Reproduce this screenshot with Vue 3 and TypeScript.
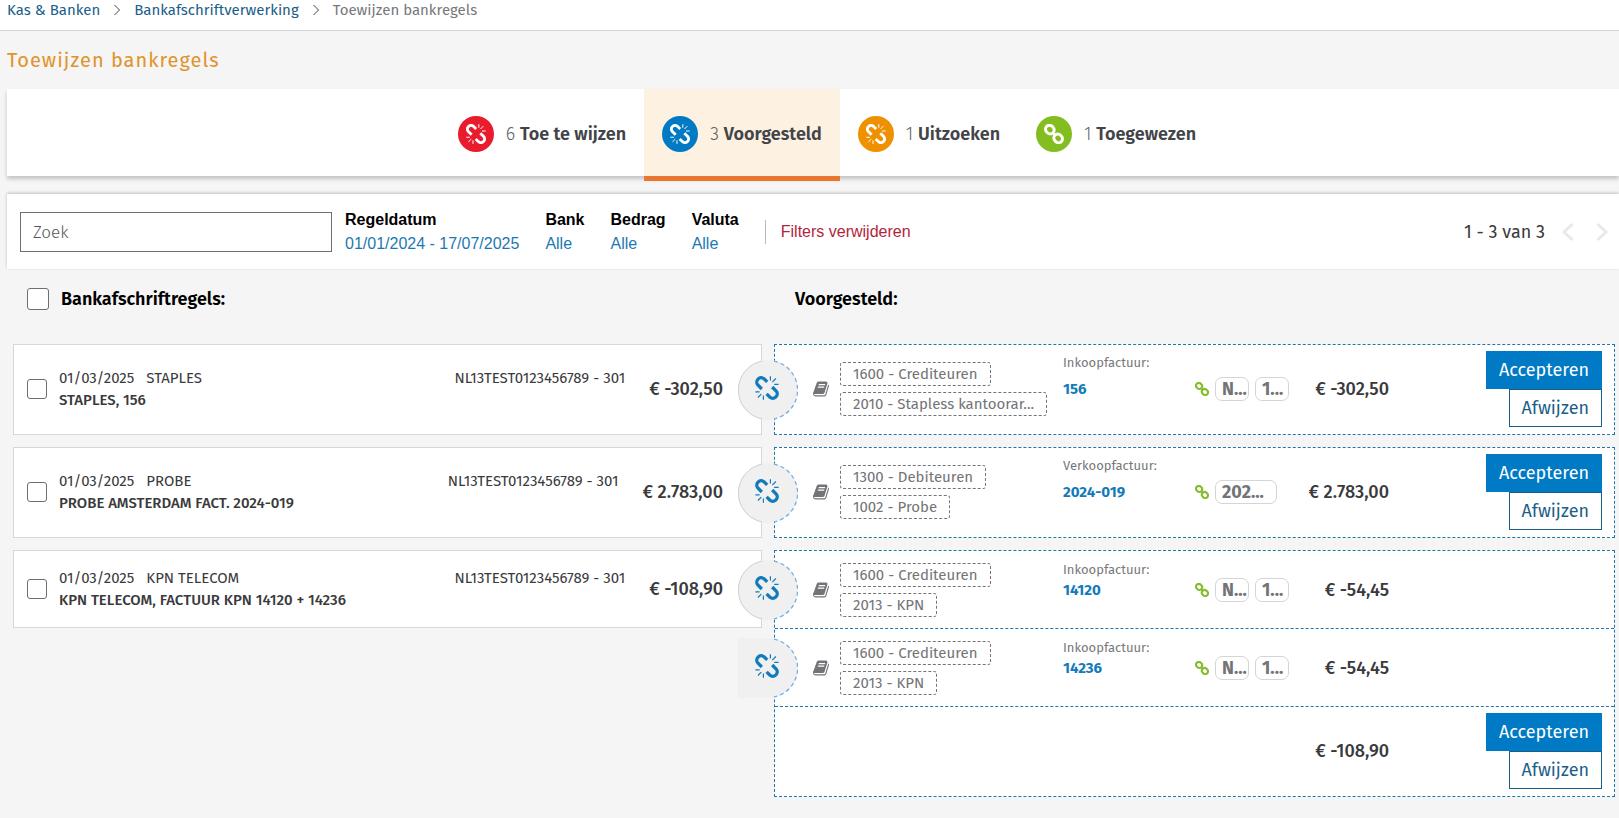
<script setup lang="ts">
import { ref } from 'vue'

type TabIcon = 'broken' | 'linked'
interface Tab { id: string; count: number; label: string; icon: TabIcon; tone: string }
interface Proposal { ledger: string[]; kind: string; invoice: string; chips: string[]; wide?: boolean; amount: string }
interface BankLine {
  id: number
  date: string
  party: string
  description: string
  account: string
  amount: string
  proposals: Proposal[]
}

const activeTab = ref('voorgesteld')
const search = ref('')
const selectAll = ref(false)
const selected = ref<number[]>([])

const tabs: Tab[] = [
  { id: 'toe-te-wijzen', count: 6, label: 'Toe te wijzen', icon: 'broken', tone: 'red' },
  { id: 'voorgesteld', count: 3, label: 'Voorgesteld', icon: 'broken', tone: 'blue' },
  { id: 'uitzoeken', count: 1, label: 'Uitzoeken', icon: 'broken', tone: 'orange' },
  { id: 'toegewezen', count: 1, label: 'Toegewezen', icon: 'linked', tone: 'green' },
]

const filters = [
  { label: 'Regeldatum', value: '01/01/2024 - 17/07/2025' },
  { label: 'Bank', value: 'Alle' },
  { label: 'Bedrag', value: 'Alle' },
  { label: 'Valuta', value: 'Alle' },
]

const lines: BankLine[] = [
  {
    id: 1, date: '01/03/2025', party: 'STAPLES', description: 'STAPLES, 156',
    account: 'NL13TEST0123456789 - 301', amount: '€ -302,50',
    proposals: [
      { ledger: ['1600 - Crediteuren', '2010 - Stapless kantoorar...'], kind: 'Inkoopfactuur:', invoice: '156', chips: ['N...', '1...'], amount: '€ -302,50' },
    ],
  },
  {
    id: 2, date: '01/03/2025', party: 'PROBE', description: 'PROBE AMSTERDAM FACT. 2024-019',
    account: 'NL13TEST0123456789 - 301', amount: '€ 2.783,00',
    proposals: [
      { ledger: ['1300 - Debiteuren', '1002 - Probe'], kind: 'Verkoopfactuur:', invoice: '2024-019', chips: ['202...'], wide: true, amount: '€ 2.783,00' },
    ],
  },
  {
    id: 3, date: '01/03/2025', party: 'KPN TELECOM', description: 'KPN TELECOM, FACTUUR KPN 14120 + 14236',
    account: 'NL13TEST0123456789 - 301', amount: '€ -108,90',
    proposals: [
      { ledger: ['1600 - Crediteuren', '2013 - KPN'], kind: 'Inkoopfactuur:', invoice: '14120', chips: ['N...', '1...'], amount: '€ -54,45' },
      { ledger: ['1600 - Crediteuren', '2013 - KPN'], kind: 'Inkoopfactuur:', invoice: '14236', chips: ['N...', '1...'], amount: '€ -54,45' },
    ],
  },
]

function toggleAll() {
  selected.value = selectAll.value ? lines.map((l) => l.id) : []
}
</script>

<template>
  <svg class="defs" aria-hidden="true">
    <symbol id="icon-broken" viewBox="0 0 24 24">
      <g fill="none" stroke="currentColor">
        <path stroke-width="3.3" d="M12.2 5.9 9 2.8A4.4 4.4 0 0 0 2.8 9L6.8 13M11.6 17.9 15 21.2A4.4 4.4 0 0 0 21.2 15L17.2 11" />
        <path stroke-width="1.2" d="M15.4.3v4.2M20.9 2.5 17.3 6.1M19.2 8.4h4.4M.4 15.9h4.2M2.9 21.5 6.3 18.1M8.4 19.6v4.2" />
      </g>
    </symbol>
    <symbol id="icon-linked" viewBox="0 0 24 24">
      <g fill="none" stroke="currentColor" stroke-width="3.6">
        <rect x="1.600" y="2" width="10.800" height="9.400" rx="4.700" transform="rotate(45 7 6.700)" />
        <rect x="11.600" y="12.600" width="10.800" height="9.400" rx="4.700" transform="rotate(45 17 17.300)" />
        <path stroke-width="3" d="M10 10l4 4" />
      </g>
    </symbol>
    <symbol id="icon-book" viewBox="0 0 1664 1792">
      <path fill="currentColor" d="M1639 478q40 57 18 129l-275 906q-19 64-76.500 107.500t-122.500 43.500h-923q-77 0-148.500-53.500t-99.500-131.500q-24-67-2-127 0-4 3-27t4-37q1-8-3-21.500t-3-19.500q2-11 8-21t16.500-23.500 16.500-23.500q23-38 45-91.500t30-91.500q3-10 .5-30t-.5-28q3-11 17-28t17-23q21-36 42-92t25-90q1-9-2.500-32t.5-28q4-13 22-30.500t22-22.500q19-26 42.500-84.500t27.500-96.500q1-8-3-25.500t-2-26.500q2-8 9-18t18-23 17-21q8-12 16.500-30.500t15-35 16-36 19.500-32 26.500-23.500 36-11.500 47.500 5.500l-1 3q38-9 51-9h761q74 0 114 56t18 130l-274 906q-36 119-71.500 153.500t-128.500 34.500h-869q-27 0-38 15-11 16-1 43 24 70 144 70h923q29 0 56-15.500t35-41.500l300-987q7-22 5-57 38 15 59 43zm-1064 2q-4 13 2 22.500t20 9.500h608q13 0 25.500-9.500t16.500-22.500l21-64q4-13-2-22.500t-20-9.500h-608q-13 0-25.500 9.500t-16.500 22.500zm-83 256q-4 13 2 22.500t20 9.500h608q13 0 25.500-9.500t16.500-22.500l21-64q4-13-2-22.500t-20-9.500h-608q-13 0-25.500 9.500t-16.500 22.500z" />
    </symbol>
  </svg>

  <div class="page">
    <nav class="breadcrumb" aria-label="Kruimelpad">
      <a href="#">Kas &amp; Banken</a>
      <svg class="crumb-sep" viewBox="0 0 8 12"><path d="M1.500 1 6.500 6 1.500 11" /></svg>
      <a href="#">Bankafschriftverwerking</a>
      <svg class="crumb-sep" viewBox="0 0 8 12"><path d="M1.500 1 6.500 6 1.500 11" /></svg>
      <span>Toewijzen bankregels</span>
    </nav>

    <main>
      <h1 class="title">Toewijzen bankregels</h1>

      <nav class="tabs" aria-label="Status">
        <button
          v-for="tab in tabs"
          :key="tab.id"
          type="button"
          class="tab"
          :class="{ active: tab.id === activeTab }"
          @click="activeTab = tab.id"
        >
          <span class="tab-icon" :class="tab.tone">
            <svg><use :href="`#icon-${tab.icon}`" /></svg>
          </span>
          <span class="tab-text"><span class="tab-count">{{ tab.count }}</span> <b>{{ tab.label }}</b></span>
        </button>
      </nav>

      <section class="filters">
        <input v-model="search" class="search" type="text" placeholder="Zoek" aria-label="Zoek" />
        <div v-for="f in filters" :key="f.label" class="filter">
          <span class="filter-label">{{ f.label }}</span>
          <button type="button" class="filter-value">{{ f.value }}</button>
        </div>
        <span class="divider"></span>
        <button type="button" class="clear">Filters verwijderen</button>
        <div class="pager">
          <span>1 - 3 van 3</span>
          <button type="button" aria-label="Vorige"><svg viewBox="0 0 12 20"><path d="M10.500 2 2 10 10.500 18" /></svg></button>
          <button type="button" aria-label="Volgende"><svg viewBox="0 0 12 20"><path d="M1.500 2 10 10 1.500 18" /></svg></button>
        </div>
      </section>

      <div class="board">
        <div class="pair heads">
          <label class="head head-left">
            <input v-model="selectAll" type="checkbox" class="check large" @change="toggleAll" />
            Bankafschriftregels:
          </label>
          <h2 class="head head-right">Voorgesteld:</h2>
        </div>

        <div v-for="line in lines" :key="line.id" class="pair">
          <article class="bank-line" :class="{ compact: line.proposals.length > 1 }">
            <input v-model="selected" type="checkbox" class="check" :value="line.id" :aria-label="line.description" />
            <div class="line-text">
              <div class="line-top">
                <span>{{ line.date }}</span>
                <span>{{ line.party }}</span>
                <span class="account">{{ line.account }}</span>
              </div>
              <strong>{{ line.description }}</strong>
            </div>
            <span class="amount">{{ line.amount }}</span>
          </article>

          <div class="proposals">
            <div
              v-for="(p, i) in line.proposals"
              :key="p.invoice"
              class="proposal"
              :class="{ compact: line.proposals.length > 1 }"
            >
              <svg class="knot" viewBox="0 0 60 60">
                <path v-if="i > 0" class="knot-fill" d="M0 0H30A30 30 0 0 1 30 60H0Z" />
                <circle v-else class="knot-fill" cx="30" cy="30" r="30" />
                <path v-if="i === 0" class="knot-solid" d="M24 1.100A29.500 29.500 0 0 0 24 58.900" />
                <path class="knot-dashed" d="M36 1.100A29.500 29.500 0 0 1 36 58.900" />
                <use class="knot-icon" href="#icon-broken" x="17" y="16" width="24" height="24" />
              </svg>
              <svg class="book"><use href="#icon-book" /></svg>
              <div class="ledger">
                <span v-for="l in p.ledger" :key="l" class="tag">{{ l }}</span>
              </div>
              <div class="invoice">
                <span class="invoice-kind">{{ p.kind }}</span>
                <a href="#">{{ p.invoice }}</a>
              </div>
              <div class="matches">
                <svg><use href="#icon-linked" /></svg>
                <span v-for="c in p.chips" :key="c" class="chip" :class="{ wide: p.wide }">{{ c }}</span>
              </div>
              <span class="amount">{{ p.amount }}</span>
              <div v-if="line.proposals.length === 1" class="actions">
                <button type="button" class="accept">Accepteren</button>
                <button type="button" class="reject">Afwijzen</button>
              </div>
            </div>
            <div v-if="line.proposals.length > 1" class="proposal">
              <span class="amount total">{{ line.amount }}</span>
              <div class="actions">
                <button type="button" class="accept">Accepteren</button>
                <button type="button" class="reject">Afwijzen</button>
              </div>
            </div>
          </div>
        </div>
      </div>
    </main>
  </div>
</template>

<style>
body {
  background: #f5f5f5;
}
</style>

<style scoped>
.defs {
  position: absolute;
  width: 0;
  height: 0;
}
.page {
  min-height: 100vh;
  overflow: hidden;
  box-sizing: border-box;
  background: #f5f5f5;
  color: #3a3a3c;
  font-family: "Fira Sans", Roboto, sans-serif;
  font-size: 15px;
}
button {
  font: inherit;
  color: inherit;
  background: none;
  border: 0;
  padding: 0;
  cursor: pointer;
}
a {
  text-decoration: none;
}

.breadcrumb {
  display: flex;
  align-items: center;
  gap: 13px;
  padding: 0 7px 10px;
  background: #fff;
  border-bottom: 1px solid #d4d4d4;
  font-size: 15px;
  line-height: 20px;
  color: #77787b;
}
.breadcrumb a {
  color: #1b5e88;
}
.crumb-sep {
  width: 8px;
  height: 12px;
  fill: none;
  stroke: #444;
}

.title {
  margin: 17px 0 17px 7px;
  font-size: 20px;
  font-weight: 400;
  line-height: 24px;
  letter-spacing: 1px;
  color: #e0932a;
}

.tabs {
  display: flex;
  justify-content: center;
  margin-left: 7px;
  padding-left: 28px;
  background: #fff;
  box-shadow: 0 3px 4px rgba(0, 0, 0, 0.2);
}
.tab {
  position: relative;
  display: flex;
  align-items: center;
  gap: 12px;
  height: 87px;
  padding: 3px 18px 0;
  font-size: 18px;
  color: #434448;
}
.tab b {
  font-weight: 600;
}
.tab.active {
  background: #fdf1e1;
}
.tab.active::after {
  content: "";
  position: absolute;
  left: 0;
  right: 0;
  bottom: -5px;
  height: 5px;
  background: #e87530;
}
.tab-count {
  font-weight: 300;
  color: #606164;
}
.tab-icon {
  display: flex;
  align-items: center;
  justify-content: center;
  width: 36px;
  height: 36px;
  border-radius: 50%;
  color: #fff;
}
.tab-icon svg {
  width: 20px;
  height: 20px;
}
.red { background: #e81c2c; }
.blue { background: #007ac4; }
.orange { background: #ee9000; }
.green { background: #83bd1f; }

.filters {
  display: flex;
  align-items: center;
  gap: 26px;
  margin: 18px 0 0 7px;
  padding: 14px 11px 13px 13px;
  background: #fff;
  box-shadow: 0 -1px 3px rgba(0, 0, 0, 0.22);
  font-family: "Liberation Sans", Arial, sans-serif;
  font-size: 16px;
}
.search {
  box-sizing: border-box;
  width: 312px;
  height: 40px;
  margin-right: -13px;
  padding: 0 12px;
  border: 1px solid #6d6e70;
  background: #fff;
  font: 300 17px "Fira Sans", Roboto, sans-serif;
  color: #3a3a3c;
}
.search::placeholder {
  color: #555;
  opacity: 1;
}
.filter {
  display: flex;
  flex-direction: column;
  align-items: flex-start;
  line-height: 24px;
}
.filter-label {
  font-weight: 700;
  color: #000;
}
.filter-value {
  color: #1c79b0;
}
.divider {
  width: 1px;
  height: 24px;
  margin-right: -11px;
  background: #b8b8b8;
}
.clear {
  color: #b3243a;
}
.pager {
  display: flex;
  align-items: center;
  gap: 22px;
  margin-left: auto;
  font-family: "Fira Sans", Roboto, sans-serif;
  font-size: 18px;
}
.pager span {
  margin-right: -5px;
}
.pager button {
  display: flex;
}
.pager svg {
  width: 12px;
  height: 20px;
  fill: none;
  stroke: #e9e9e9;
  stroke-width: 3;
}

.board {
  display: flex;
  flex-direction: column;
  gap: 12px;
  padding: 0 4px 0 13px;
}
.pair {
  display: grid;
  grid-template-columns: 749fr 841fr;
  align-items: start;
  gap: 12px;
}
.heads {
  align-items: center;
  padding: 17px 0 20px;
}
.head {
  margin: 0;
  font-size: 18px;
  font-weight: 600;
  line-height: 26px;
  color: #000;
}
.head-left {
  display: flex;
  align-items: center;
  gap: 12px;
  padding-left: 14px;
}
.head-right {
  padding-left: 21px;
}
.check {
  appearance: none;
  box-sizing: border-box;
  flex: none;
  width: 20px;
  height: 20px;
  margin: 0;
  border: 1px solid #6d6e70;
  border-radius: 3px;
  background: #fff;
}
.check.large {
  width: 22px;
  height: 22px;
}
.check:checked {
  background: #007ac4;
}

.bank-line {
  display: flex;
  align-items: center;
  min-height: 87px;
  padding: 0 38px 2px 13px;
  border: 1px solid #d6d7d8;
  background: #fff;
}
.bank-line.compact {
  min-height: 76px;
  padding-bottom: 0;
}
.line-text {
  flex: 1;
  margin: 0 24px 0 12px;
  line-height: 22px;
}
.line-top {
  display: flex;
  gap: 12px;
}
.account {
  margin-left: auto;
}
strong {
  font-weight: 500;
}
.amount {
  font-size: 18px;
  font-weight: 500;
  text-align: right;
  white-space: nowrap;
}

.proposals {
  border: 1px dashed #1f78ab;
  background: #fff;
}
.proposal {
  position: relative;
  display: grid;
  grid-template-columns: 27px 223fr 132fr 102fr 92fr 213fr;
  align-items: center;
  min-height: 87px;
  padding: 0 12px 2px 38px;
}
.proposal.compact {
  min-height: 77px;
  padding-bottom: 0;
}
.proposal + .proposal {
  border-top: 1px dashed #1f78ab;
}
.knot {
  position: absolute;
  left: -37px;
  top: 50%;
  width: 60px;
  height: 60px;
  margin-top: -30px;
}
.knot-fill {
  fill: #f0f0f0;
}
.knot-solid {
  fill: none;
  stroke: #cfd0d1;
}
.knot-dashed {
  fill: none;
  stroke: #78aee6;
  stroke-width: 1.3;
  stroke-dasharray: 4 3;
}
.knot-icon {
  color: #137bb9;
}
.book {
  width: 16px;
  height: 18px;
  color: #737477;
}
.ledger {
  display: flex;
  flex-direction: column;
  align-items: flex-start;
  gap: 6px;
}
.tag {
  padding: 0 12px;
  border: 1px dashed #737477;
  border-radius: 3px;
  font-size: 15px;
  line-height: 22px;
  white-space: nowrap;
  color: #737477;
}
.invoice {
  display: flex;
  flex-direction: column;
  padding-bottom: 26px;
  line-height: 26px;
}
.compact .invoice {
  padding-bottom: 20px;
  line-height: 20px;
}
.invoice-kind {
  font-size: 13px;
  color: #77787b;
}
.invoice a {
  font-size: 15px;
  font-weight: 700;
  color: #137bb9;
}
.matches {
  display: flex;
  align-items: center;
  gap: 6px;
}
.matches svg {
  width: 14px;
  height: 14px;
  color: #86bd2c;
}
.chip {
  box-sizing: border-box;
  width: 34px;
  padding: 0 0 0 6px;
  border: 1px solid #d4d5d6;
  border-radius: 7px;
  font-size: 18px;
  font-weight: 700;
  line-height: 22px;
  color: #737477;
}
.chip.wide {
  width: 62px;
}
.total {
  grid-column: 1 / 6;
}
.actions {
  display: flex;
  flex-direction: column;
  align-items: flex-end;
}
.accept,
.reject {
  height: 38px;
  padding: 0 12px;
  border: 1px solid #007ac4;
  font-size: 18px;
}
.accept {
  background: #007ac4;
  color: #fff;
}
.reject {
  border-color: #1b5e88;
  background: #fff;
  color: #1b5e88;
}
</style>
